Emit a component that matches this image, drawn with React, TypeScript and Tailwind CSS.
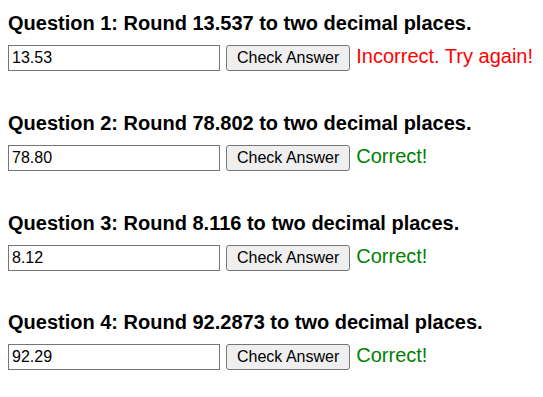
import { FC, useState } from 'react';

type Question = {
  id: number;
  value: string;
  answer: string;
  initial: string;
  feedback: 'correct' | 'incorrect';
};

const questions: Question[] = [
  { id: 1, value: '13.537', answer: '13.54', initial: '13.53', feedback: 'incorrect' },
  { id: 2, value: '78.802', answer: '78.80', initial: '78.80', feedback: 'correct' },
  { id: 3, value: '8.116', answer: '8.12', initial: '8.12', feedback: 'correct' },
  { id: 4, value: '92.2873', answer: '92.29', initial: '92.29', feedback: 'correct' },
];

const QuestionBlock: FC<{ question: Question }> = ({ question }) => {
  const [input, setInput] = useState(question.initial);
  const [result, setResult] = useState(question.feedback);

  const checkAnswer = () => {
    setResult(input.trim() === question.answer ? 'correct' : 'incorrect');
  };

  return (
    <div className="flex flex-col gap-[10px]">
      <h3 className="text-[20px] leading-[23px] font-bold text-black">
        Question {question.id}: Round {question.value} to two decimal places.
      </h3>
      <div className="flex items-baseline">
        <input
          type="text"
          value={input}
          onChange={e => setInput(e.target.value)}
          className="h-[26px] w-[212px] border border-[#767676] bg-white px-[3px] text-[16px] text-black outline-none"
        />
        <button
          onClick={checkAnswer}
          className="ml-[6px] h-[26px] rounded-[3px] border border-[#767676] bg-[#efefef] px-[10px] text-[16px] text-black"
        >
          Check Answer
        </button>
        <span
          className={
            result === 'correct'
              ? 'ml-[6px] text-[20px] leading-[23px] text-[#008000]'
              : 'ml-[6px] text-[20px] leading-[23px] text-[#ff0000]'
          }
        >
          {result === 'correct' ? 'Correct!' : 'Incorrect. Try again!'}
        </span>
      </div>
    </div>
  );
};

const App: FC = () => {
  return (
    <div className="flex min-h-[397px] flex-col gap-[40.75px] bg-white px-[8px] pt-[12px] font-['Liberation_Sans',Arial,sans-serif]">
      {questions.map(q => (
        <QuestionBlock key={q.id} question={q} />
      ))}
    </div>
  );
};

export default App;
